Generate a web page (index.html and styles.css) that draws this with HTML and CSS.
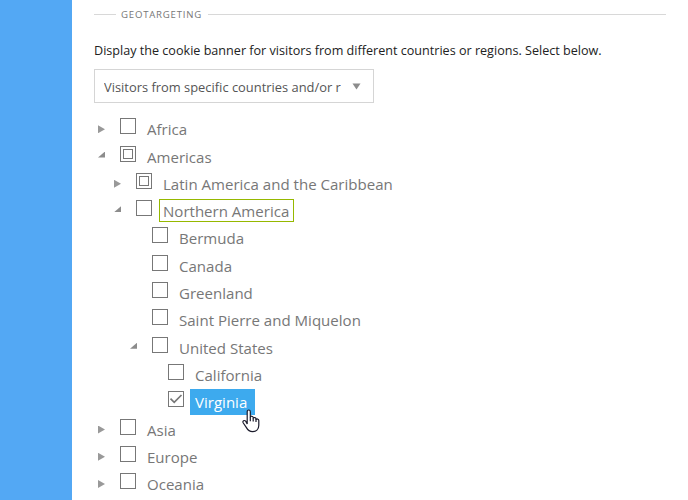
FILE: index.html
```
<!DOCTYPE html>
<html lang="en">
<head>
    <meta charset="UTF-8">
    <meta name="viewport" content="width=device-width, initial-scale=1.0">
    <title>Geotargeting</title>
    <link rel="stylesheet" href="styles.css">
</head>
<body>
    <div class="sidebar"></div>
    <main class="content">
        <div class="section-title"><span>GEOTARGETING</span></div>
        <p class="description">Display the cookie banner for visitors from different countries or regions. Select below.</p>

        <div class="select">
            <span class="select-text">Visitors from specific countries and/or regions</span>
            <svg class="select-arrow" width="9" height="7" viewBox="0 0 9 7"><path d="M.5 .5h8L4.5 6.5z"/></svg>
        </div>

        <ul class="tree">
            <li>
                <div class="row"><span class="toggle closed"></span><span class="checkbox"></span><span class="label">Africa</span></div>
            </li>
            <li>
                <div class="row"><span class="toggle open"></span><span class="checkbox partial"></span><span class="label">Americas</span></div>
                <ul>
                    <li>
                        <div class="row"><span class="toggle closed"></span><span class="checkbox partial"></span><span class="label">Latin America and the Caribbean</span></div>
                    </li>
                    <li>
                        <div class="row"><span class="toggle open"></span><span class="checkbox"></span><span class="label focused">Northern America</span></div>
                        <ul>
                            <li><div class="row"><span class="toggle"></span><span class="checkbox"></span><span class="label">Bermuda</span></div></li>
                            <li><div class="row"><span class="toggle"></span><span class="checkbox"></span><span class="label">Canada</span></div></li>
                            <li><div class="row"><span class="toggle"></span><span class="checkbox"></span><span class="label">Greenland</span></div></li>
                            <li><div class="row"><span class="toggle"></span><span class="checkbox"></span><span class="label">Saint Pierre and Miquelon</span></div></li>
                            <li>
                                <div class="row"><span class="toggle open"></span><span class="checkbox"></span><span class="label">United States</span></div>
                                <ul>
                                    <li><div class="row"><span class="toggle"></span><span class="checkbox"></span><span class="label">California</span></div></li>
                                    <li>
                                        <div class="row">
                                            <span class="toggle"></span>
                                            <span class="checkbox">
                                                <svg width="14" height="14" viewBox="0 0 14 14"><path d="M1.5 6.7l3.7 3.6 7.3-7.3"/></svg>
                                            </span>
                                            <span class="label selected">Virginia
                                                <svg class="cursor" width="18" height="24" viewBox="0 0 18 24"><path d="M5.2 15V2.7c0-2.3 3.1-2.3 3.1 0v5.5c.2-1.4 2.7-1.3 2.9.3v.8c.4-1.2 2.7-1 2.8.5v.8c.6-1.1 2.8-.7 2.8 1v4.7c0 3.8-2.4 6.4-6.2 6.4-3.2 0-4.7-1.3-6-3.8L1.3 14c-1.2-2 1-3.3 2.4-1.8z"/><path d="M8.3 8v4.3M11.2 9v3.5M14 10v3"/></svg>
                                            </span>
                                        </div>
                                    </li>
                                </ul>
                            </li>
                        </ul>
                    </li>
                </ul>
            </li>
            <li>
                <div class="row"><span class="toggle closed"></span><span class="checkbox"></span><span class="label">Asia</span></div>
            </li>
            <li>
                <div class="row"><span class="toggle closed"></span><span class="checkbox"></span><span class="label">Europe</span></div>
            </li>
            <li>
                <div class="row"><span class="toggle closed"></span><span class="checkbox"></span><span class="label">Oceania</span></div>
            </li>
        </ul>
    </main>
</body>
</html>
```
FILE: styles.css
```
* {
    box-sizing: border-box;
}
body {
    margin: 0;
    display: flex;
    height: 500px;
    overflow: hidden;
    background: #fff;
    font-family: "Open Sans", "Noto Sans", sans-serif;
}
.sidebar {
    width: 72px;
    flex-shrink: 0;
    background: #53a8f4;
}
.content {
    flex: 1;
    padding: 7px 22px 0;
}
.section-title {
    display: flex;
    align-items: center;
    height: 15px;
    font-size: 9.6px;
    letter-spacing: 0.8px;
    color: #777;
}
.section-title::before,
.section-title::after {
    content: "";
    height: 1px;
    background: #d8d8d8;
}
.section-title::before {
    width: 22px;
    margin-right: 5px;
}
.section-title::after {
    flex: 1;
    margin-left: 6px;
}
.description {
    margin: 19px 0 0;
    line-height: 20px;
    font-size: 12.6px;
    color: #222;
    white-space: nowrap;
}
.select {
    display: flex;
    align-items: center;
    width: 280px;
    height: 34px;
    margin-top: 8px;
    padding: 1px 12px 0 9px;
    border: 1px solid #d5d5d5;
}
.select-text {
    width: 237px;
    overflow: hidden;
    white-space: nowrap;
    font-size: 12.9px;
    line-height: 20px;
    color: #555;
}
.select-arrow {
    margin-left: auto;
    fill: #8c8c8c;
}
.tree,
.tree ul {
    list-style: none;
    margin: 0;
    padding: 0;
}
.tree {
    padding-top: 13.25px;
    font-size: 15.05px;
    color: #777;
}
.tree ul {
    padding-left: 16px;
}
.row {
    display: flex;
    align-items: flex-start;
    height: 27.3px;
}
.toggle {
    width: 26px;
    height: 26px;
    padding-left: 4px;
}
.toggle::before {
    content: "";
    display: block;
}
.closed::before {
    width: 7px;
    height: 8px;
    margin-top: 9px;
    background: #999;
    clip-path: polygon(0 0, 100% 50%, 0 100%);
}
.open::before {
    width: 7px;
    height: 6px;
    margin-top: 8px;
    background: #8c8c8c;
    clip-path: polygon(100% 0, 100% 100%, 0 100%);
}
.checkbox {
    display: flex;
    align-items: center;
    justify-content: center;
    width: 16px;
    height: 16px;
    margin-top: 2px;
    border: 1px solid #777;
}
/* inner square of a partly checked branch */
.partial {
    box-shadow: inset 0 0 0 2px #fff, inset 0 0 0 3px #777;
}
.checkbox path {
    fill: none;
    stroke: #777;
    stroke-width: 1.7;
}
.label {
    position: relative;
    height: 26px;
    margin-left: 6px;
    padding: 0 5px;
    line-height: 26px;
    white-space: nowrap;
}
.focused {
    width: 135px;
    height: 23px;
    margin: 1px 0 0 7px;
    padding: 0 3px;
    line-height: 22px;
    border: 1px solid #96b800;
}
.selected {
    width: 65px;
    background: #3daaee;
    color: #fff;
}
.cursor {
    position: absolute;
    left: 52px;
    top: 20px;
    fill: #fff;
    stroke: #1b1b2b;
    stroke-width: 1.2;
}
```
